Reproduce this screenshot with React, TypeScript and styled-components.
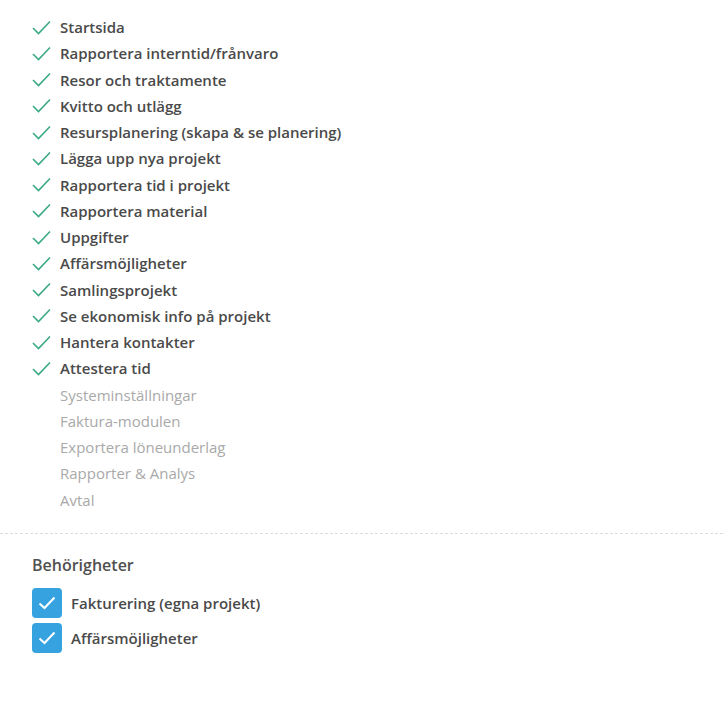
import React from 'react';
import styled, { createGlobalStyle } from "styled-components";

// базовые стили страницы
const GlobalStyle = createGlobalStyle`
  body {
    margin: 0;
    background: #fff;
    font-family: "Open Sans", "Lato", sans-serif;
  }
`

type ModuleType = {
    title: string;
    enabled: boolean;
}

const modules: ModuleType[] = [
    { title: "Startsida", enabled: true },
    { title: "Rapportera interntid/frånvaro", enabled: true },
    { title: "Resor och traktamente", enabled: true },
    { title: "Kvitto och utlägg", enabled: true },
    { title: "Resursplanering (skapa & se planering)", enabled: true },
    { title: "Lägga upp nya projekt", enabled: true },
    { title: "Rapportera tid i projekt", enabled: true },
    { title: "Rapportera material", enabled: true },
    { title: "Uppgifter", enabled: true },
    { title: "Affärsmöjligheter", enabled: true },
    { title: "Samlingsprojekt", enabled: true },
    { title: "Se ekonomisk info på projekt", enabled: true },
    { title: "Hantera kontakter", enabled: true },
    { title: "Attestera tid", enabled: true },
    { title: "Systeminställningar", enabled: false },
    { title: "Faktura-modulen", enabled: false },
    { title: "Exportera löneunderlag", enabled: false },
    { title: "Rapporter & Analys", enabled: false },
    { title: "Avtal", enabled: false },
]

const permissions = ["Fakturering (egna projekt)", "Affärsmöjligheter"]

// галочка
const Check = ({ color }: { color: string }) => (
    <svg width="19" height="15" viewBox="0 0 19 15" fill="none">
        <path d="M1 8 L6.5 13.5 L18 1.5" stroke={color} strokeWidth="1.6" />
    </svg>
)

export default function App() {
    return (
        <>
            <GlobalStyle />
            <Page>
                <ModuleList>
                    {modules.map(m => (
                        <ModuleRow key={m.title}>
                            <IconBox>{m.enabled && <Check color="#3aaa82" />}</IconBox>
                            <ModuleTitle enabled={m.enabled}>{m.title}</ModuleTitle>
                        </ModuleRow>
                    ))}
                </ModuleList>
                <Divider />
                <Section>
                    <Heading>Behörigheter</Heading>
                    <PermList>
                        {permissions.map(p => (
                            <PermRow key={p}>
                                <Box>
                                    <svg width="18" height="14" viewBox="0 0 18 14" fill="none">
                                        <path d="M1.5 7.5 L6.5 12 L16.5 1.5" stroke="#fff" strokeWidth="2" />
                                    </svg>
                                </Box>
                                <PermTitle>{p}</PermTitle>
                            </PermRow>
                        ))}
                    </PermList>
                </Section>
            </Page>
        </>
    )
}

const Page = styled.div`
    width: 723px;
    min-height: 728px;
`
const ModuleList = styled.ul`
    list-style: none;
    margin: 0;
    padding: 14px 0 0 32px;
`
const ModuleRow = styled.li`
    display: flex;
    align-items: center;
    height: 26.25px;
`
const IconBox = styled.span`
    width: 28px;
    display: flex;
    align-items: center;
`
const ModuleTitle = styled.span<{ enabled: boolean }>`
    font-size: 15px;
    font-weight: ${p => p.enabled ? 600 : 400};
    color: ${p => p.enabled ? "#4a4a4a" : "#a9a9a9"};
`
const Divider = styled.div`
    margin-top: 20px;
    border-top: 1px dashed #dcdcdc;
`
const Section = styled.div`
    padding: 19px 32px 0;
`
const Heading = styled.h3`
    margin: 0 0 11px;
    font-size: 16px;
    font-weight: 600;
    color: #505050;
    line-height: 24px;
`
const PermList = styled.div`
    display: flex;
    flex-direction: column;
    gap: 5px;
`
const PermRow = styled.label`
    display: flex;
    align-items: center;
    gap: 9px;
`
const Box = styled.span`
    width: 30px;
    height: 30px;
    border-radius: 4px;
    background: #36a3e0;
    display: flex;
    align-items: center;
    justify-content: center;
`
const PermTitle = styled.span`
    font-size: 15px;
    font-weight: 600;
    color: #4a4a4a;
`
